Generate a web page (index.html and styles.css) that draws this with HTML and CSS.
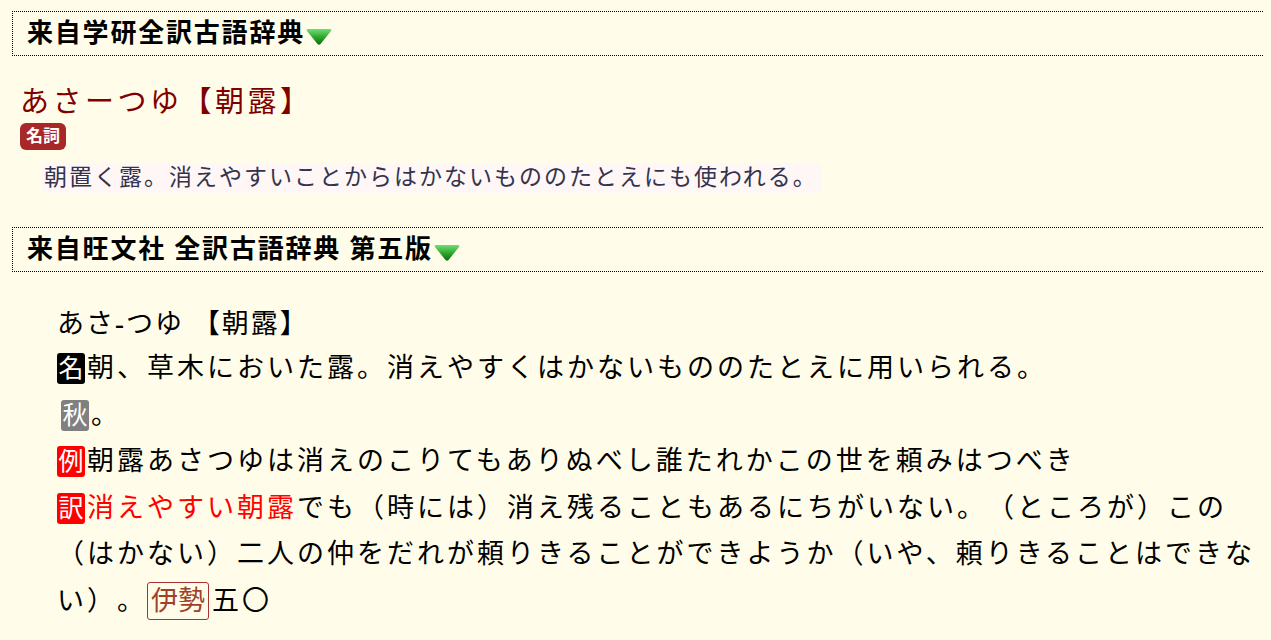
FILE: index.html
```html
<!DOCTYPE html>
<html lang="ja">
<head>
    <meta charset="UTF-8">
    <meta name="viewport" content="width=device-width, initial-scale=1.0">
    <title>あさつゆ【朝露】</title>
    <link rel="stylesheet" href="styles.css">
</head>
<body>
    <div class="dict-header">来自学研全訳古語辞典<svg class="arrow" width="26" height="18" viewBox="0 0 26 18"><defs><linearGradient id="gA" x1="0" y1="0" x2="0" y2="1"><stop offset="0" stop-color="#74de74"/><stop offset="0.5" stop-color="#2fa82f"/><stop offset="1" stop-color="#0b6e0b"/></linearGradient></defs><path d="M2 1 H24 Q26 1 25 3 L14.5 16 Q13 17.5 11.5 16 L1 3 Q0 1 2 1 Z" fill="url(#gA)"/></svg></div>

    <div class="entry">
        <div class="entry-title">あさーつゆ【朝露】</div>
        <div><span class="pos-tag">名詞</span></div>
        <div class="def"><span class="def-text">朝置く露。消えやすいことからはかないもののたとえにも使われる。</span></div>
    </div>

    <div class="dict-header dict-header-next">来自旺文社 全訳古語辞典 第五版<svg class="arrow" width="26" height="18" viewBox="0 0 26 18"><defs><linearGradient id="gB" x1="0" y1="0" x2="0" y2="1"><stop offset="0" stop-color="#74de74"/><stop offset="0.5" stop-color="#2fa82f"/><stop offset="1" stop-color="#0b6e0b"/></linearGradient></defs><path d="M2 1 H24 Q26 1 25 3 L14.5 16 Q13 17.5 11.5 16 L1 3 Q0 1 2 1 Z" fill="url(#gB)"/></svg></div>

    <div class="entry2">
        <div class="headword">あさ<b>-</b>つゆ 【朝露】</div>
        <div class="line"><span class="tag tag-noun">名</span>朝、草木においた露。消えやすくはかないもののたとえに用いられる。</div>
        <div class="line"><span class="tag tag-season">秋</span>。</div>
        <div class="line"><span class="tag tag-red">例</span>朝露あさつゆは消えのこりてもありぬべし誰たれかこの世を頼みはつべき</div>
        <div class="line"><span class="tag tag-red">訳</span><span class="hl">消えやすい朝露</span>でも（時には）消え残ることもあるにちがいない。（ところが）この（はかない）二人の仲をだれが頼りきることができようか（いや、頼りきることはできない）。<span class="src">伊勢</span>五〇</div>
    </div>
</body>
</html>
```

FILE: styles.css
```css
body {
    margin: 8px;
    background-color: #fffde9;
    color: #000;
    font-family: "Liberation Serif", "Noto Sans CJK JP", serif;
    text-spacing-trim: space-all;
    overflow: hidden;
}

/* dictionary source bar */
.dict-header {
    margin: 3px -40px 0 4px;
    height: 43px;
    line-height: 43px;
    padding: 0 14px;
    border: 1px dotted #000;
    font-size: 26px;
    font-weight: bold;
    letter-spacing: 1.8px;
    white-space: nowrap;
}

.dict-header-next {
    margin-top: 34px;
}

.arrow {
    vertical-align: -4px;
    margin-left: 1px;
}

/* first entry */
.entry {
    padding-left: 12px;
}

.entry-title {
    margin-top: 28px;
    font-size: 29px;
    line-height: 36px;
    letter-spacing: 3.5px;
    color: #800000;
}

.pos-tag {
    display: inline-block;
    margin-top: 3px;
    padding: 0 6px;
    height: 27px;
    line-height: 27px;
    font-size: 17px;
    font-weight: bold;
    color: #fff;
    background-color: #a82828;
    border-radius: 6px;
}

.def {
    margin-top: 13px;
    padding-left: 22px;
}

.def-text {
    display: inline-block;
    height: 30px;
    line-height: 30px;
    padding: 0 4px 0 2px;
    font-size: 23px;
    letter-spacing: 2px;
    color: #33334d;
    background-color: #fff6f6;
}

/* second entry */
.entry2 {
    margin-top: 25px;
    padding-left: 49px;
    font-size: 27px;
    line-height: 46.6px;
    letter-spacing: 3px;
}

.headword {
    padding-top: 6px;
    line-height: 42px;
    font-size: 27px;
    letter-spacing: 2px;
}

.tag {
    display: inline-block;
    width: 28px;
    height: 31px;
    line-height: 31px;
    margin-right: 2px;
    font-size: 25px;
    letter-spacing: 0;
    text-align: center;
    color: #fff;
    border-radius: 3px;
}

.tag-noun { background-color: #000; }
.tag-season { background-color: #808080; margin-left: 4px; }
.tag-red { background-color: #ff0000; }

.hl { color: #ff0000; }

.src {
    display: inline-block;
    height: 36px;
    line-height: 36px;
    padding: 0 3px;
    margin-right: 3px;
    letter-spacing: 0;
    border: 1px solid #a83232;
    border-radius: 3px;
    color: #a0402a;
}
```
